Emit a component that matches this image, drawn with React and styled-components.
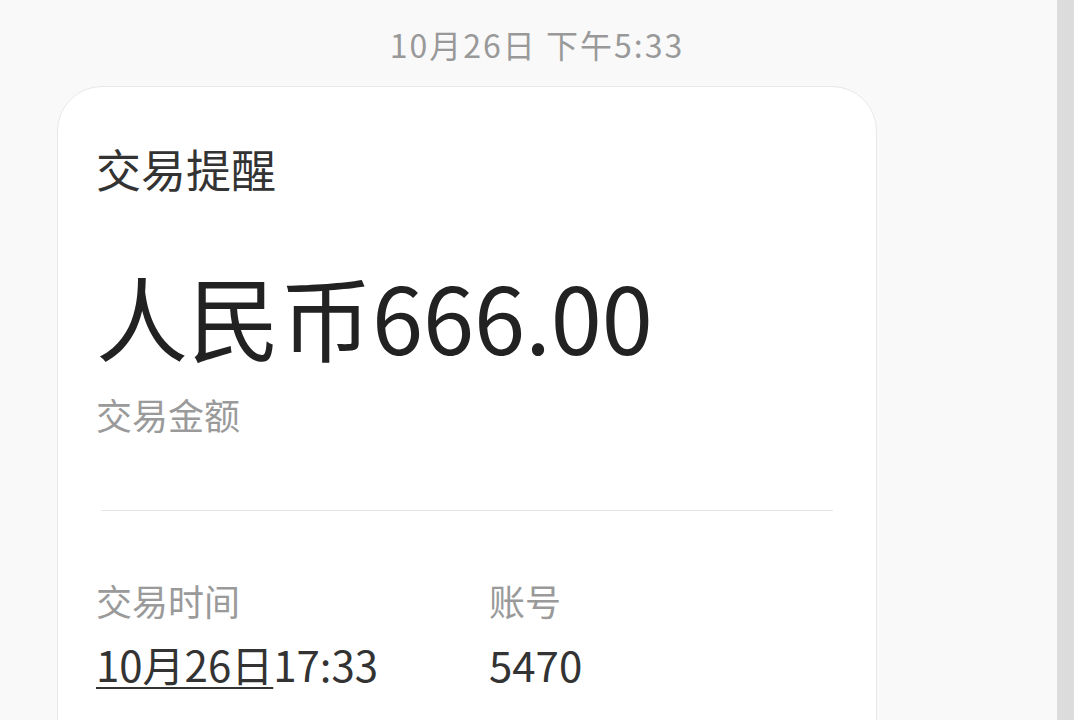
import React from 'react';
import styled, {createGlobalStyle} from 'styled-components';

const GlobalStyle = createGlobalStyle`
  html, body {
    margin: 0;
    padding: 0;
    height: 720px;
    overflow: hidden;
    background: #f9f9f9;
    font-family: "Noto Sans CJK SC", "Noto Sans", sans-serif;
  }
`;

const Page = styled.div`
  display: flex;
  height: 720px;
  width: 1074px;
  background: #f9f9f9;
`;

const Main = styled.div`
  flex: 1;
  display: flex;
  flex-direction: column;
  overflow: hidden;
`;

const ScrollTrack = styled.div`
  width: 17px;
  background: #dcdcdc;
`;

const Stamp = styled.div`
  padding: 21px 0 0 17px;
  height: 86px;
  flex-shrink: 0;
  box-sizing: border-box;
  text-align: center;
  font-size: 32px;
  line-height: 46px;
  letter-spacing: 2px;
  color: #999;
`;

const Card = styled.div`
  margin-left: 57px;
  width: 820px;
  box-sizing: border-box;
  background: #fff;
  border: 1px solid #e8e8e8;
  border-radius: 45px;
  padding: 54px 43px 200px 38px;
  flex-shrink: 0;
`;

const Title = styled.div`
  font-size: 45px;
  line-height: 56px;
  color: #333;
`;

const Amount = styled.div`
  margin-top: 66px;
  font-size: 92px;
  line-height: 104px;
  color: #222;
`;

const Caption = styled.div`
  margin-top: ${p => p.$gap || 0}px;
  font-size: 36px;
  line-height: 48px;
  color: #9a9a9a;
`;

const Divider = styled.hr`
  margin: 72px 0 0 5px;
  border: none;
  border-top: 1px solid #e5e5e5;
`;

const Details = styled.div`
  margin-top: 65px;
  display: grid;
  grid-template-columns: 393px 1fr;
  row-gap: 14px;
`;

const Value = styled.div`
  font-size: 42px;
  line-height: 52px;
  color: #333;
`;

const Link = styled.span`
  text-decoration: underline;
  text-decoration-thickness: 2px;
  text-underline-offset: 5px;
`;

export default function App() {
  return (
    <>
      <GlobalStyle/>
      <Page>
        <Main>
          <Stamp>10月26日 下午5:33</Stamp>
          <Card>
            <Title>交易提醒</Title>
            <Amount>人民币666.00</Amount>
            <Caption $gap={23}>交易金额</Caption>
            <Divider/>
            <Details>
              <Caption>交易时间</Caption>
              <Caption>账号</Caption>
              <Value><Link>10月26日</Link>17:33</Value>
              <Value>5470</Value>
            </Details>
          </Card>
        </Main>
        <ScrollTrack/>
      </Page>
    </>
  );
}
